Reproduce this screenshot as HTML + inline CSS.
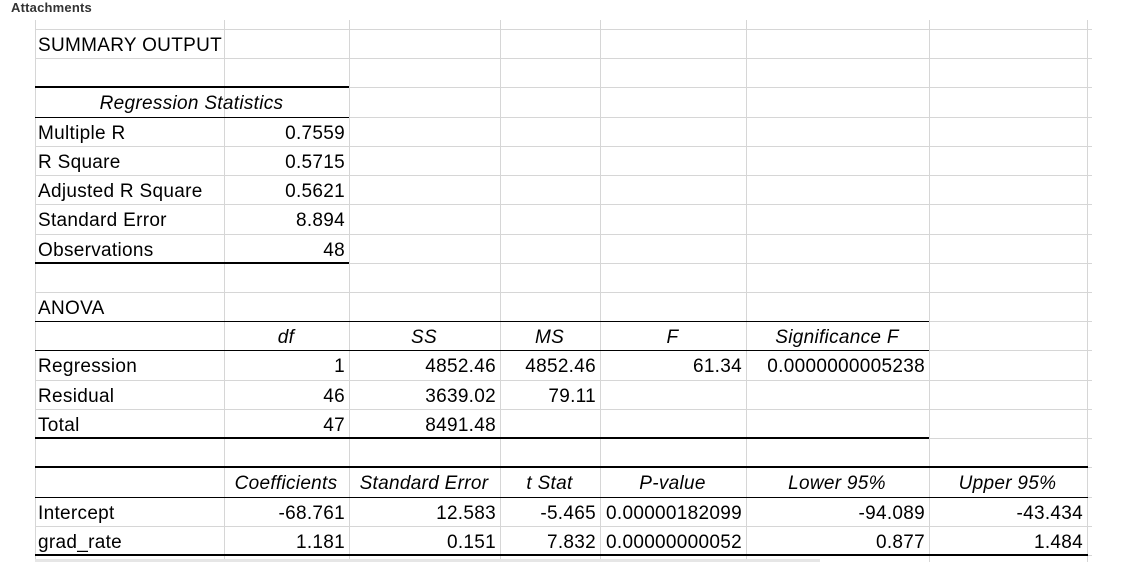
<!DOCTYPE html>
<html><head><meta charset="utf-8"><style>
body{margin:0;width:1143px;height:562px;background:#fff;position:relative;overflow:hidden;font-family:"Liberation Sans",sans-serif;color:#000}
.t{position:absolute;font-size:19px;line-height:29px;white-space:nowrap;letter-spacing:.3px}
.r{text-align:right}.c{text-align:center}.i{font-style:italic}
.g{position:absolute;background:#d6d6d6}
.b{position:absolute;background:#000}
</style></head><body>
<div class="t" style="left:11px;top:-7px;font-size:13px;font-weight:bold;color:#333;letter-spacing:.2px">Attachments</div>
<div id="grid"></div>
<script>
var Y=function(k){return 29+k*29.22};
var xs=[35,224,349,500,600,746,929,1087];
var h='';
xs.forEach(function(x){h+='<div class="g" style="left:'+x+'px;top:20px;width:1px;height:542px"></div>'});
for(var k=0;k<=18;k++)h+='<div class="g" style="left:35px;top:'+Math.round(Y(k))+'px;width:1057px;height:1px"></div>';
function L(k,x1,x2,w){h+='<div class="b" style="left:'+x1+'px;top:'+(Math.round(Y(k))-(w>1?1:0))+'px;width:'+(x2-x1)+'px;height:'+w+'px"></div>'}
L(2,35,349,2);L(3,35,349,1);L(8,35,349,2);L(10,35,929,1);L(11,35,929,1);L(14,35,929,2);L(15,35,1088,2);L(16,35,1088,1);L(18,35,1088,2);
h+='<div style="position:absolute;left:35px;top:559px;width:785px;height:3px;background:#e6e6e6"></div>';
function T(r,c,txt,cls,span){var x1=xs[c],x2=xs[c+(span||1)];h+='<div class="t '+(cls||'')+'" style="left:'+(x1+3)+'px;width:'+(x2-x1-7)+'px;top:'+(Y(r)+2)+'px">'+txt+'</div>'}
T(0,0,'SUMMARY OUTPUT');
T(2,0,'Regression Statistics','c i',2);
[['Multiple R','0.7559'],['R Square','0.5715'],['Adjusted R Square','0.5621'],['Standard Error','8.894'],['Observations','48']].forEach(function(a,i){T(3+i,0,a[0]);T(3+i,1,a[1],'r')});
T(9,0,'ANOVA');
['df','SS','MS','F','Significance F'].forEach(function(s,i){T(10,1+i,s,'c i')});
T(11,0,'Regression');T(11,1,'1','r');T(11,2,'4852.46','r');T(11,3,'4852.46','r');T(11,4,'61.34','r');T(11,5,'0.0000000005238','r');
T(12,0,'Residual');T(12,1,'46','r');T(12,2,'3639.02','r');T(12,3,'79.11','r');
T(13,0,'Total');T(13,1,'47','r');T(13,2,'8491.48','r');
['Coefficients','Standard Error','t Stat','P-value','Lower 95%','Upper 95%'].forEach(function(s,i){T(15,1+i,s,'c i')});
T(16,0,'Intercept');T(16,1,'-68.761','r');T(16,2,'12.583','r');T(16,3,'-5.465','r');T(16,4,'0.00000182099','r');T(16,5,'-94.089','r');T(16,6,'-43.434','r');
T(17,0,'grad_rate');T(17,1,'1.181','r');T(17,2,'0.151','r');T(17,3,'7.832','r');T(17,4,'0.00000000052','r');T(17,5,'0.877','r');T(17,6,'1.484','r');
document.getElementById('grid').innerHTML=h;
</script>
</body></html>
